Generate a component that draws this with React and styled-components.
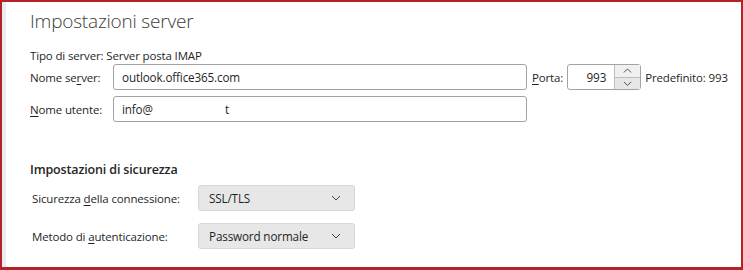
import styled, { createGlobalStyle } from 'styled-components';

const GlobalStyle = createGlobalStyle`
  html, body {
    margin: 0;
    padding: 0;
    background: #ffffff;
  }
  body {
    font-family: 'Segoe UI', 'Open Sans', 'Noto Sans', sans-serif;
    color: #1f1f1f;
  }
`;

const Frame = styled.div`
  width: 743px;
  height: 270px;
  box-sizing: border-box;
  border: 2px solid #b42227;
  border-bottom-width: 3px;
  display: flex;
  background: #ffffff;
`;

const Strip = styled.div`
  width: 4px;
  background: #ebebf2;
`;

const Content = styled.div`
  flex: 1;
  padding: 6px 0 0 24px;
  display: flex;
  flex-direction: column;
  letter-spacing: -0.15px;
`;

const Title = styled.h1`
  margin: 0;
  font-size: 19px;
  font-weight: 300;
  line-height: 26px;
  color: #3c3c3c;
  letter-spacing: -0.2px;
`;

const Info = styled.div`
  margin-top: 14px;
  font-size: 11.5px;
  line-height: 16px;
`;

const Row = styled.div`
  display: flex;
  align-items: center;
  height: 26px;
  margin-top: ${(p) => p.$gap || 0}px;
  font-size: 11.5px;
`;

const Label = styled.label`
  width: ${(p) => p.$width}px;
  flex: none;
  u {
    text-decoration: underline;
    text-underline-offset: 2px;
  }
`;

const TextBox = styled.div`
  box-sizing: border-box;
  width: ${(p) => p.$width}px;
  height: 26px;
  border: 1px solid #a3a3a3;
  border-radius: 3px;
  display: flex;
  align-items: center;
  padding-left: 8px;
  font-size: 11.7px;
  background: #ffffff;
`;

const SideLabel = styled.span`
  margin-left: ${(p) => p.$gap}px;
  u {
    text-decoration: underline;
    text-underline-offset: 2px;
  }
`;

const PortBox = styled.div`
  box-sizing: border-box;
  margin-left: 4px;
  width: 74px;
  height: 26px;
  border: 1px solid #a3a3a3;
  border-radius: 3px;
  display: flex;
  align-items: center;
  font-size: 11.7px;
`;

const PortValue = styled.span`
  flex: 1;
  text-align: right;
  padding-right: 8px;
`;

const Spinner = styled.div`
  width: 26px;
  height: 24px;
  display: flex;
  flex-direction: column;
  border-left: 1px solid #bdbdbd;
  box-sizing: border-box;
`;

const SpinButton = styled.div`
  flex: 1;
  display: flex;
  align-items: center;
  justify-content: center;
  background: #f0f0f0;
  & + & {
    border-top: 1px solid #bdbdbd;
    background: #e6e6e6;
  }
`;

const Heading = styled.h2`
  margin: 39px 0 0 0;
  font-size: 12.5px;
  font-weight: 600;
  line-height: 18px;
  color: #262626;
`;

const Group = styled.div`
  padding-left: 2px;
  display: flex;
  flex-direction: column;
`;

const Select = styled.div`
  box-sizing: border-box;
  width: 157px;
  height: 26px;
  border: 1px solid #d6d6d6;
  border-radius: 3px;
  background: #e7e7e7;
  display: flex;
  align-items: center;
  justify-content: space-between;
  padding: 0 13px 0 10px;
  font-size: 11.7px;
`;

function Chevron({ up, size = 10 }) {
  return (
    <svg width={size} height={size * 0.6} viewBox="0 0 10 6">
      <polyline
        points={up ? '1,5 5,1 9,5' : '1,1 5,5 9,1'}
        fill="none"
        stroke="#444"
        strokeWidth="1"
      />
    </svg>
  );
}

export default function App() {
  return (
    <>
      <GlobalStyle />
      <Frame>
        <Strip />
        <Content>
          <Title>Impostazioni server</Title>
          <Info>Tipo di server: Server posta IMAP</Info>
          <Row>
            <Label $width={83}>
              Nome se<u>r</u>ver:
            </Label>
            <TextBox $width={414}>outlook.office365.com</TextBox>
            <SideLabel $gap={5}>
              <u>P</u>orta:
            </SideLabel>
            <PortBox>
              <PortValue>993</PortValue>
              <Spinner>
                <SpinButton>
                  <Chevron up size={9} />
                </SpinButton>
                <SpinButton>
                  <Chevron size={9} />
                </SpinButton>
              </Spinner>
            </PortBox>
            <SideLabel $gap={4}>Predefinito: 993</SideLabel>
          </Row>
          <Row $gap={6}>
            <Label $width={83}>
              <u>N</u>ome utente:
            </Label>
            <TextBox $width={414}>
              info@&nbsp;&nbsp;&nbsp;&nbsp;&nbsp;&nbsp;&nbsp;&nbsp;&nbsp;&nbsp;&nbsp;&nbsp;&nbsp;&nbsp;&nbsp;&nbsp;&nbsp;&nbsp;&nbsp;&nbsp;&nbsp;&nbsp;&nbsp;&nbsp;&nbsp;t
            </TextBox>
          </Row>
          <Heading>Impostazioni di sicurezza</Heading>
          <Group>
            <Row $gap={6}>
              <Label $width={166}>
                Sicurezza <u>d</u>ella connessione:
              </Label>
              <Select>
                <span>SSL/TLS</span>
                <Chevron />
              </Select>
            </Row>
            <Row $gap={12}>
              <Label $width={166}>
                Metodo di <u>a</u>utenticazione:
              </Label>
              <Select>
                <span>Password normale</span>
                <Chevron />
              </Select>
            </Row>
          </Group>
        </Content>
      </Frame>
    </>
  );
}
